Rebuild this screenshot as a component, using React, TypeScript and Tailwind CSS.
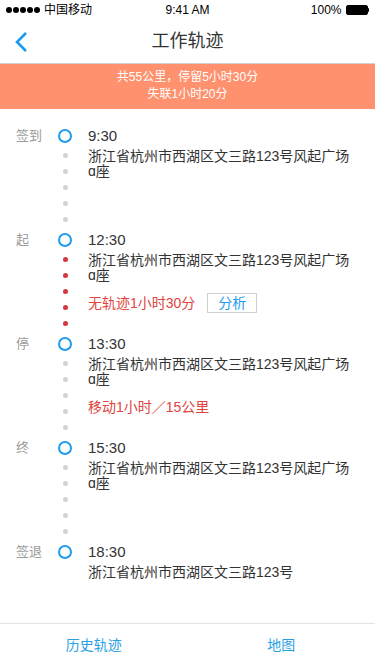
import React from "react";

const FONT = { fontFamily: '"Liberation Sans", "Noto Sans CJK SC", sans-serif' };

type Sec = {
  label: string;
  time: string;
  addr: string;
  red?: boolean;
  extra?: React.ReactNode;
  dots?: boolean;
};

function Section({ s }: { s: Sec }) {
  return (
    <div className="flex items-start">
      <div className="w-[58px] pl-4 text-[13px] leading-[14px] text-[#9a9a9a]">{s.label}</div>
      <div className="flex w-[14px] flex-col items-center">
        <div className="h-[14px] w-[14px] rounded-full border-2 border-[#1e9bf0]" />
        {s.dots !== false && (
          <div className="flex flex-col items-center gap-[11px] pt-[10px] pb-[11px]">
            {[0, 1, 2, 3, 4].map((i) => (
              <div
                key={i}
                className={
                  s.red
                    ? "h-[5px] w-[5px] rounded-full bg-[#d2373b]"
                    : "h-[5px] w-[5px] rounded-full bg-[#d3d3d3]"
                }
              />
            ))}
          </div>
        )}
      </div>
      <div className="ml-4 w-[264px]">
        <div className="text-[15px] leading-[14px] text-[#333]">{s.time}</div>
        <div className="mt-[6px] text-[14px] leading-[15px] text-[#333]">{s.addr}</div>
        {s.extra}
      </div>
    </div>
  );
}

export default function App() {
  const addr = "浙江省杭州市西湖区文三路123号风起广场ɑ座";
  const secs: Sec[] = [
    { label: "签到", time: "9:30", addr },
    {
      label: "起",
      time: "12:30",
      addr,
      red: true,
      extra: (
        <div className="mt-[10px] flex items-center gap-[12px]">
          <span className="text-[14px] leading-[20px] text-[#e0443e]">无轨迹1小时30分</span>
          <span className="flex h-[20px] w-[50px] items-center justify-center border border-[#cfcfcf] text-[14px] text-[#1e9bf0]">
            分析
          </span>
        </div>
      ),
    },
    {
      label: "停",
      time: "13:30",
      addr,
      extra: (
        <div className="mt-[10px] text-[14px] leading-[20px] text-[#e0443e]">移动1小时／15公里</div>
      ),
    },
    { label: "终", time: "15:30", addr },
    { label: "签退", time: "18:30", addr: "浙江省杭州市西湖区文三路123号", dots: false },
  ];

  return (
    <div style={FONT} className="flex h-[667px] w-[375px] flex-col bg-white">
      {/* status bar */}
      <div className="relative flex h-[20px] items-center justify-between px-[6px] text-[12px] text-black">
        <div className="flex items-center gap-[4px]">
          <span className="flex gap-[1px]">
            {[0, 1, 2, 3, 4].map((i) => (
              <span key={i} className="h-[6px] w-[6px] rounded-full bg-black" />
            ))}
          </span>
          <span>中国移动</span>
        </div>
        <div className="absolute left-1/2 -translate-x-1/2">9:41 AM</div>
        <div className="flex items-center gap-[4px]">
          <span>100%</span>
          <span className="flex items-center">
            <span className="h-[10px] w-[22px] rounded-[2px] border border-black bg-black" />
            <span className="h-[4px] w-[1.5px] rounded-r bg-black" />
          </span>
        </div>
      </div>
      {/* nav */}
      <div className="relative flex h-[44px] items-center justify-center border-b border-[#d0d0d0]">
        <svg className="absolute left-[14px]" width="14" height="22" viewBox="0 0 14 22">
          <path d="M12 2 L3 11 L12 20" fill="none" stroke="#1a9bef" strokeWidth="2.6" />
        </svg>
        <span className="text-[18px] text-[#333]">工作轨迹</span>
      </div>
      {/* banner */}
      <div className="bg-[#ff916e] pt-[5px] pb-[6px] text-center text-[12px] leading-[17px] text-white">
        <div>共55公里，停留5小时30分</div>
        <div>失联1小时20分</div>
      </div>
      {/* list */}
      <div className="flex-1 pt-[20px]">
        {secs.map((s, i) => (
          <Section key={i} s={s} />
        ))}
      </div>
      {/* tabs */}
      <div className="flex h-[44px] border-t border-[#e3e3e3] text-[14px] text-[#2a9fe2]">
        <div className="flex flex-1 items-center justify-center">历史轨迹</div>
        <div className="flex flex-1 items-center justify-center">地图</div>
      </div>
    </div>
  );
}
